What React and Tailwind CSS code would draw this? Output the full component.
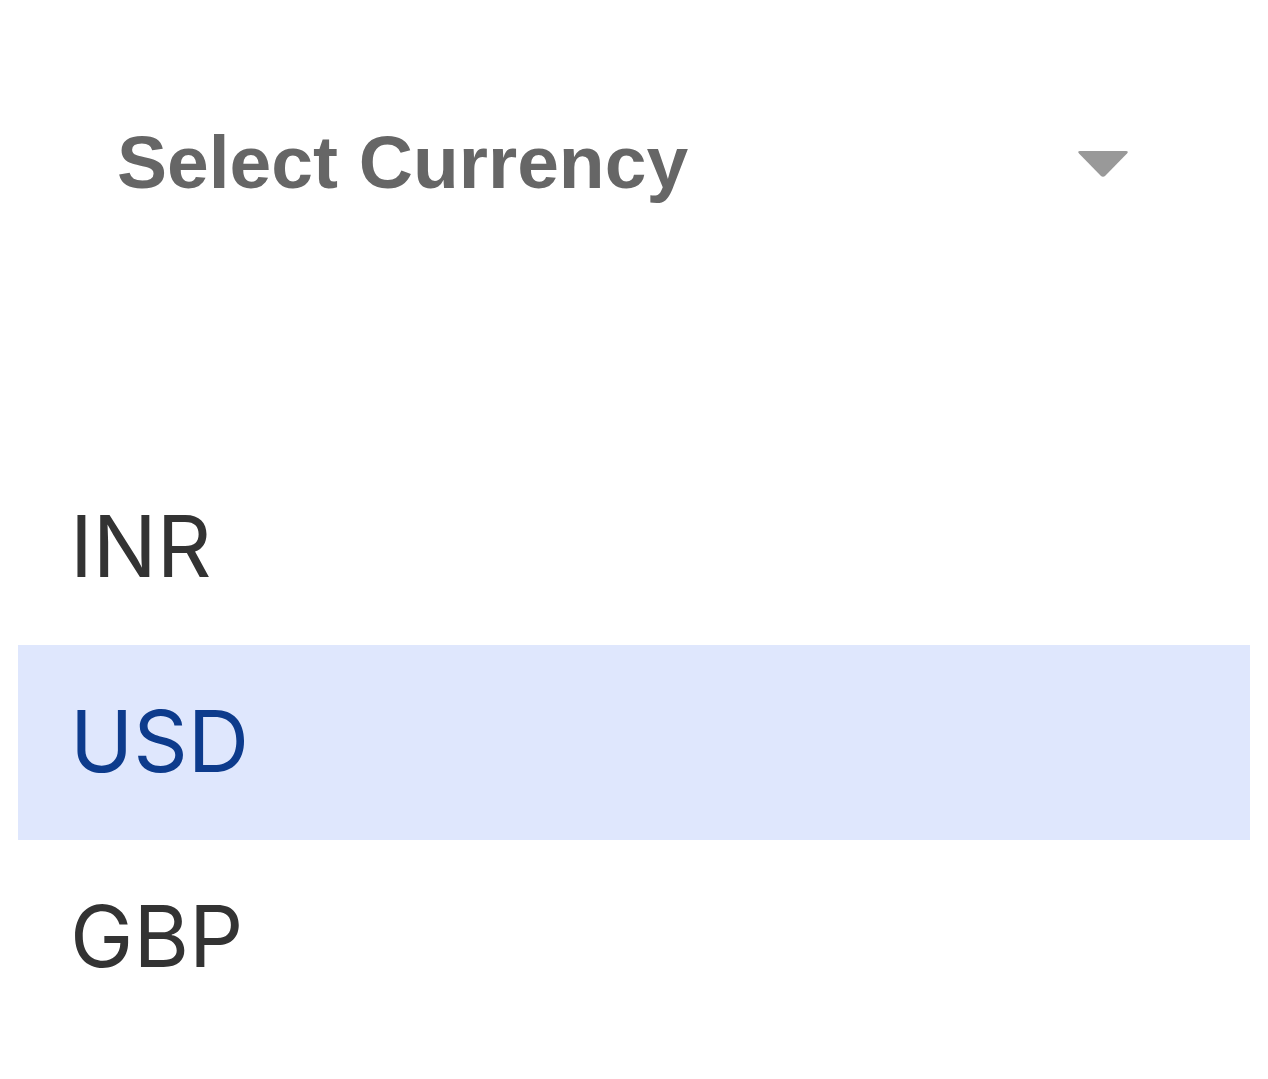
import React, { useState } from "react";

const currencies = ["INR", "USD", "GBP"];

export default function App() {
  const [selected, setSelected] = useState("USD");

  return (
    <div className="min-h-screen w-full bg-white px-[18px]">
      <div className="flex h-[326px] items-center justify-between pl-[99px] pr-[120px] pb-[1px]">
        <span
          className="text-[75px] font-bold text-[#666666] leading-none"
          style={{ fontFamily: '"Liberation Sans", Arial, sans-serif' }}
        >
          Select Currency
        </span>
        <svg width="54" height="30" viewBox="0 0 54 30" className="mb-[-2px]">
          <path
            d="M4 2 H50 Q53 2 51 4.5 L29.5 26.5 Q27 29 24.5 26.5 L3 4.5 Q1 2 4 2 Z"
            fill="#999999"
          />
        </svg>
      </div>

      <div className="mt-[124px]">
        {currencies.map((c) => (
          <div
            key={c}
            onClick={() => setSelected(c)}
            className={
              "flex h-[195px] items-center pl-[52px] pb-[2px] " +
              (selected === c ? "bg-[#dfe7fd] text-[#0d3b8c]" : "text-[#333333]")
            }
          >
            <span
              className="text-[85px] leading-none"
              style={{ fontFamily: "Inter, Roboto, sans-serif" }}
            >
              {c}
            </span>
          </div>
        ))}
      </div>
    </div>
  );
}
